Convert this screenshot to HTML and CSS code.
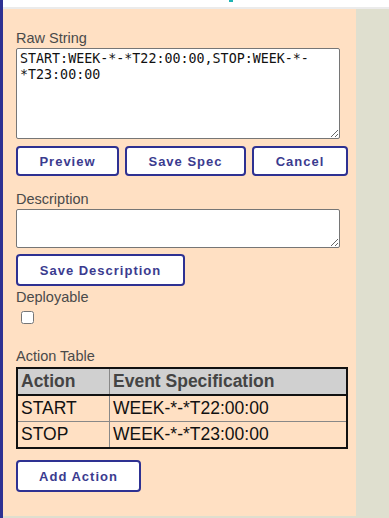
FILE: index.html
```html
<!DOCTYPE html>
<html lang="en">
<head>
    <meta charset="UTF-8">
    <meta name="viewport" content="width=device-width, initial-scale=1.0">
    <link rel="stylesheet" href="styles.css">
    <title>Event Spec</title>
</head>
<body>
    <div class="frame">
        <div class="topbar"><span class="title-tail"></span></div>

        <div class="content-row">
            <section class="panel">
                <label class="field-label" for="rawString">Raw String</label>
                <textarea id="rawString" class="raw-input">START:WEEK-*-*T22:00:00,STOP:WEEK-*-*T23:00:00</textarea>

                <div class="button-row">
                    <button class="btn">Preview</button>
                    <button class="btn">Save Spec</button>
                    <button class="btn">Cancel</button>
                </div>

                <label class="field-label label-desc" for="description">Description</label>
                <textarea id="description" class="desc-input"></textarea>
                <button class="btn btn-desc">Save Description</button>

                <label class="field-label label-deploy" for="deployable">Deployable</label>
                <input type="checkbox" id="deployable" class="deploy-check">

                <div class="field-label label-table">Action Table</div>
                <table class="action-table">
                    <thead>
                        <tr>
                            <th class="col-action">Action</th>
                            <th>Event Specification</th>
                        </tr>
                    </thead>
                    <tbody>
                        <tr>
                            <td>START</td>
                            <td>WEEK-*-*T22:00:00</td>
                        </tr>
                        <tr>
                            <td>STOP</td>
                            <td>WEEK-*-*T23:00:00</td>
                        </tr>
                    </tbody>
                </table>

                <button class="btn btn-add">Add Action</button>
            </section>
        </div>
    </div>
</body>
</html>
```

FILE: styles.css
```css
html, body {
    margin: 0;
    padding: 0;
    height: 100%;
}

body {
    font-family: "Liberation Sans", Arial, sans-serif;
    background-color: #dfdfcf; /* gris verdoso */
}

.frame {
    min-height: 100%;
    border-left: 3px solid #2e3192;
    box-sizing: border-box;
}

.topbar {
    height: 7px;
    background-color: #fff;
    border-bottom: 2px solid #ebebeb;
    display: flex;
}

.title-tail {
    width: 4px;
    height: 2px;
    margin-left: 226px;
    background-color: #1fb3b3;
}

.content-row {
    display: flex;
}

.panel {
    width: 353px;
    box-sizing: border-box;
    background-color: #ffe0c3; /* pêssego */
    padding: 21px 8px 24px 13px;
    display: flex;
    flex-direction: column;
    align-items: flex-start;
}

.field-label {
    font-size: 14.5px;
    line-height: 17px;
    color: #4a4a4a;
}

textarea {
    box-sizing: border-box;
    width: 324px;
    border: 1px solid #767676;
    border-radius: 2px;
    background-color: #fff;
    font-family: "DejaVu Sans Mono", monospace;
    font-size: 13.33px;
    line-height: 16px;
    color: #111;
    padding: 2px 3px;
    margin: 1px 0 0;
}

.raw-input {
    height: 91px;
}

.desc-input {
    height: 39px;
}

.button-row {
    display: grid;
    grid-template-columns: 103px 121px 96px;
    gap: 6px;
    margin-top: 7px;
}

.btn {
    box-sizing: border-box;
    height: 30px;
    background-color: #fff;
    border: 2px solid #2e3192;
    border-radius: 4px;
    font-family: "Liberation Sans", Arial, sans-serif;
    font-size: 13px;
    font-weight: bold;
    letter-spacing: 1px;
    color: #3b3b8f;
    padding: 0;
    cursor: pointer;
}

.label-desc {
    margin-top: 15px;
}

.btn-desc {
    width: 169px;
    height: 32px;
    margin-top: 6px;
}

.label-deploy {
    margin-top: 3px;
}

.deploy-check {
    width: 13px;
    height: 13px;
    margin: 5px 0 0 5px;
}

.label-table {
    margin-top: 24px;
}

.action-table {
    width: 332px;
    margin-top: 2px;
    border-collapse: collapse;
    border: 2px solid #111;
    font-size: 17.5px;
    color: #111;
}

.action-table th,
.action-table td {
    text-align: left;
    padding: 0 3px;
    height: 25px;
    border: 1px solid #888;
}

.action-table th {
    background-color: #d0d0d0;
    color: #444;
    border-bottom: 2px solid #111;
}

.col-action {
    width: 85px;
}

.btn-add {
    width: 125px;
    height: 32px;
    margin-top: 11px;
}
```
